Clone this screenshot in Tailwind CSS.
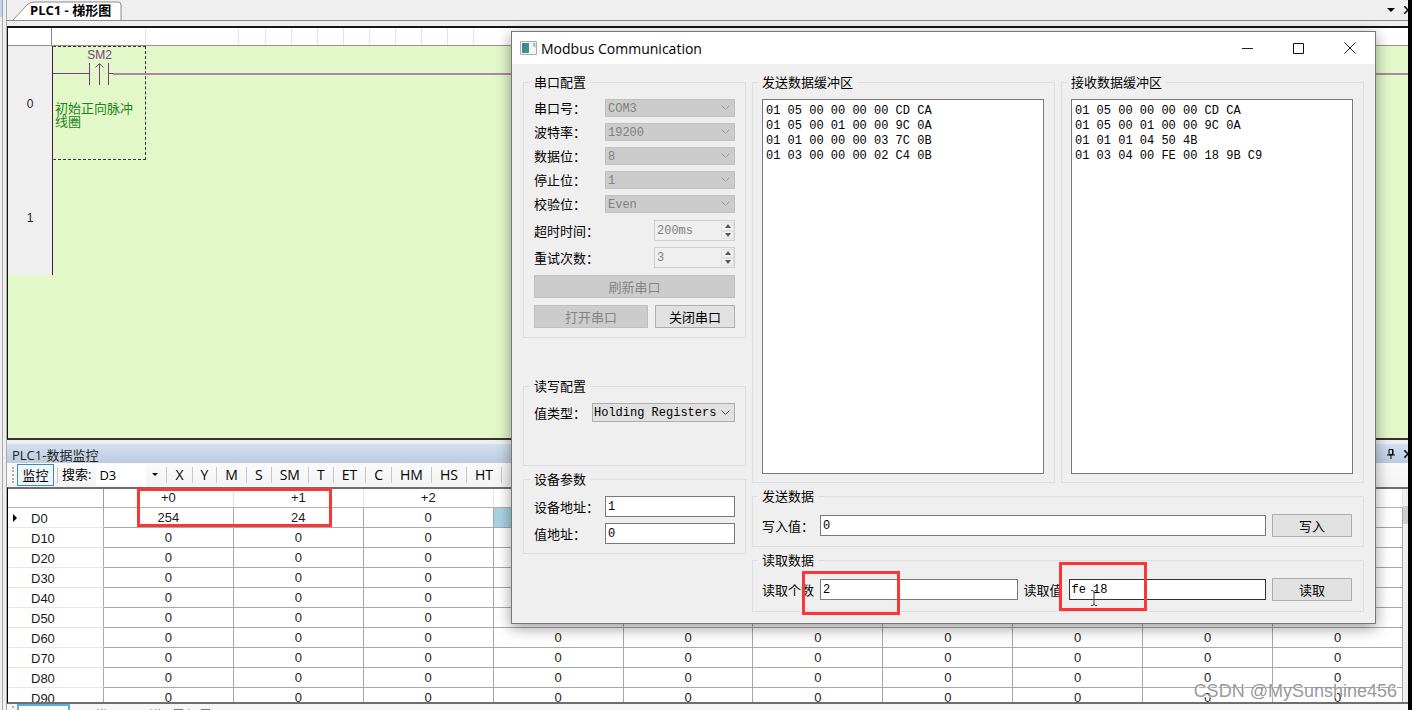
<!DOCTYPE html>
<html lang="zh-CN">
<head>
<meta charset="utf-8">
<title>PLC1 - 梯形图</title>
<script src="https://cdn.jsdelivr.net/npm/@tailwindcss/browser@4"></script>
</head>
<body class="h-screen overflow-hidden bg-[#efefef] text-[13px] text-black font-['Open_Sans','Noto_Sans_CJK_SC',sans-serif]">
<div class="relative flex h-full w-full overflow-hidden">
  <div class="w-[7px] shrink-0 border-r border-[#a8a8a8] bg-[#efefef]">
    <div class="h-[17px] w-[3px] border-r border-[#8fa3bd] bg-[#c3d3ea]"></div>
    <div class="h-full w-[3px] border-r border-[#a8a8a8]"></div>
  </div>

  <div class="flex min-w-0 flex-1 flex-col">
    <!-- Document tabs -->
    <header class="flex h-[21px] shrink-0 items-start justify-between overflow-hidden border-b border-[#8a8a8a]">
      <div class="relative h-[21px] w-[116px]">
        <svg class="absolute left-0 top-0" width="116" height="21" viewBox="0 0 116 21"><path d="M5 21 L20 5 Q23 2 27 2 H111 Q114 2 114 5 V21" fill="#fff" stroke="#8a8a8a"/></svg>
        <button type="button" class="relative ml-[23px] h-[20px] text-[13px] leading-[20px] font-bold whitespace-nowrap">PLC1 - 梯形图</button>
      </div>
      <div class="flex h-[20px] w-[21px] shrink-0 items-center gap-[9px]">
        <svg class="shrink-0" width="8" height="5" viewBox="0 0 8 5"><path d="M0 0H8L4 4Z"/></svg>
        <svg class="shrink-0" width="8" height="8" viewBox="0 0 8 8"><path d="M0 0L8 8M8 0L0 8" stroke="#000" stroke-width="1.5"/></svg>
      </div>
    </header>

    <!-- Ladder diagram -->
    <main class="mt-[5px] flex flex-1 flex-col border-y-2 border-l border-[#151515] border-b-[#333] bg-[#e2f8c9]">
      <div class="flex h-[18px] shrink-0 border-b border-[#8f978a] bg-white">
        <div class="w-[44px] border-r border-[#8a8a8a]"></div>
        <div class="w-[94px] border-r border-[#e4e4e4]"></div>
        <div class="w-[93px] border-r border-[#e4e4e4]"></div>
        <div class="w-[27px] border-r border-[#e4e4e4]"></div>
        <div class="w-[26px] border-r border-[#e4e4e4]"></div>
        <div class="w-[26px] border-r border-[#e4e4e4]"></div>
        <div class="w-[26px] border-r border-[#e4e4e4]"></div>
        <div class="w-[26px] border-r border-[#e4e4e4]"></div>
        <div class="w-[26px] border-r border-[#e4e4e4]"></div>
        <div class="w-[26px] border-r border-[#e4e4e4]"></div>
        <div class="w-[26px] border-r border-[#e4e4e4]"></div>
        <div class="w-[26px] border-r border-[#e4e4e4]"></div>
      </div>
      <div class="flex">
        <div class="w-[45px] shrink-0 border-r border-[#4a1748] bg-[#efefef] font-['Liberation_Sans',sans-serif] text-[12px] text-[#223]">
          <div class="flex h-[115px] items-center justify-center">0</div>
          <div class="flex h-[114px] items-center justify-center">1</div>
        </div>
        <div class="relative flex-1">
          <div class="h-[114px] w-[93px] border border-dashed border-[#333] border-l-transparent">
            <div class="h-[16px] text-center font-['Liberation_Sans',sans-serif] text-[12px] leading-[16px] text-[#7d3a80]">SM2</div>
            <p class="mt-[38px] pl-px font-['Noto_Sans_CJK_SC',sans-serif] text-[13px] leading-[13px] text-[#1c841c]">初始正向脉冲<br>线圈</p>
          </div>
          <div class="absolute inset-x-0 top-[16px] flex h-[24px]">
            <svg class="shrink-0" width="60" height="24" viewBox="0 0 60 24" fill="none" stroke="#7d3a80"><path d="M0 11.500H36M36.500 1V23M55.500 1V23M46.500 23V2M42.500 5.500L46.500 1.500L50.500 5.500M55 11.500H60"/></svg>
            <div class="h-[13px] flex-1 border-b-2 border-[#b184a8]"></div>
          </div>
        </div>
      </div>
    </main>

    <!-- Data monitor -->
    <section class="mt-[4px] flex h-[266px] shrink-0 flex-col">
      <div class="flex h-[19px] shrink-0 items-center justify-between bg-linear-to-b from-[#d3e1f2] to-[#bccbdd]">
        <h2 class="pl-[5px] pt-[2px] text-[13px] leading-[18px] text-[#222]">PLC1-数据监控</h2>
        <div class="flex w-[21px] shrink-0 items-center gap-[9px]">
          <svg class="shrink-0" width="8" height="10" viewBox="0 0 8 10" fill="none" stroke="#000"><path d="M2 .5H6V5.500H2ZM5.500 1V5M0 6H8M4 6V10"/></svg>
          <svg class="shrink-0" width="8" height="8" viewBox="0 0 8 8"><path d="M0 0L8 8M8 0L0 8" stroke="#000" stroke-width="1.500"/></svg>
        </div>
      </div>
      <div class="flex h-[24px] shrink-0 items-center overflow-hidden bg-linear-to-b from-[#fafafa] to-[#f3f3f3] pl-[5px] whitespace-nowrap">
        <div class="mr-[3px] h-[16px] w-0 border-l-2 border-dotted border-[#b0b0b0]"></div>
        <button type="button" class="h-[22px] w-[37px] shrink-0 border border-[#3c8fb8] bg-[#f0f6fa] leading-[20px]">监控</button>
        <div class="ml-[3px] h-[16px] w-0 border-l border-[#c8c8c8]"></div>
        <label for="find" class="ml-[4px]">搜索:</label>
        <input id="find" value="D3" class="ml-[5px] h-[22px] w-[50px] shrink-0 bg-white pl-[3px]">
        <svg class="ml-[6px] shrink-0" width="6" height="4" viewBox="0 0 6 4"><path d="M0 0H6L3 3Z"/></svg>
        <div class="ml-[8px] flex h-[16px] shrink-0 items-center text-[14px] *:h-[16px] *:border-l *:border-[#c8c8c8] *:px-2 *:leading-[16px]">
          <button type="button">X</button><button type="button">Y</button><button type="button">M</button><button type="button">S</button><button type="button">SM</button><button type="button">T</button><button type="button">ET</button><button type="button">C</button><button type="button">HM</button><button type="button">HS</button><button type="button">HT</button><button type="button">HSD</button>
        </div>
      </div>
      <div class="flex h-[217px] shrink-0 overflow-hidden border-y-2 border-l border-[#6e6e6e] border-l-black bg-white">
        <table class="w-full table-fixed border-separate border-spacing-0 self-start font-['Liberation_Sans',sans-serif] text-[13px] leading-[18px] text-[#1a1a1a]">
          <thead>
            <tr class="h-[19px] *:border-r *:border-b *:border-r-[#e2e2e2] *:border-b-[#b0b0b0] *:p-0 *:font-normal">
              <th class="w-[96px] border-r-[#9c9c9c]!"></th><th>+0</th><th>+1</th><th>+2</th><th>+3</th><th>+4</th><th>+5</th><th>+6</th><th>+7</th><th>+8</th><th>+9</th>
            </tr>
          </thead>
          <tbody id="registers"></tbody>
        </table>
        <div class="w-[5px] shrink-0 bg-[#f0f0f0] pt-[17px]"><div class="h-[18px] bg-[#cdcdcd]"></div></div>
      </div>
      <div class="flex h-[7px] items-start overflow-hidden bg-[#f6f6f6] pl-[5px]">
        <div class="mt-[2px] mr-[3px] h-[2px] w-[2px] bg-[#b0b0b0]"></div>
        <div class="h-[9px] w-[53px] shrink-0 border-2 border-[#5aafdc] bg-[#fafafa]"></div>
        <svg class="ml-[10px]" width="140" height="7" viewBox="0 0 140 7" stroke="#777" fill="none"><path d="M3 6.500H7M11 6.500H13M17 7L18 5M21 7L22 5M25 5L26 7M55 6.500H59M64 6.500H66M70 7L71 5M75 7L76 5M79 5L80 7M94 5.500H103M108 7L109 5M113 6.500H116M121 5.500H130"/></svg>
      </div>
    </section>
  </div>

  <div class="w-[4px] shrink-0 bg-black"></div>

  <!-- Highlight on registers D0 and D1 -->
  <div class="pointer-events-none absolute left-[137px] top-[488px] h-[39px] w-[195px] border-3 border-[#fb3636]"></div>

  <!-- Modbus window -->
  <div role="dialog" aria-labelledby="dlg-title" class="absolute left-[511px] top-[31px] flex w-[865px] flex-col border border-[#777] bg-[#efefef] shadow-[0_4px_14px_rgba(0,0,0,0.4)] font-['Noto_Sans_CJK_SC',sans-serif]">
    <div class="flex h-[32px] items-center bg-white pl-[8px]">
      <svg width="17" height="14" viewBox="0 0 17 14"><defs><linearGradient id="g" x2="1" y2="1"><stop stop-color="#3d79a8"/><stop offset="1" stop-color="#4a9a7a"/></linearGradient></defs><path d="M.5.5H16.500V13.500H.5Z" fill="#f4f6f8" stroke="#a9adb3"/><path d="M2 2H9V12H2Z" fill="url(#g)"/><path d="M13 2H15.500V7L13 5Z" fill="#9cc4c0"/></svg>
      <h1 id="dlg-title" class="ml-[4px] flex-1 font-['Open_Sans',sans-serif] text-[14px]">Modbus Communication</h1>
      <div class="flex *:flex *:h-[32px] *:w-[51px] *:items-center *:justify-center">
        <button type="button" aria-label="最小化"><svg width="11" height="11" viewBox="0 0 11 11"><path d="M0 5.500H11" stroke="#222"/></svg></button>
        <button type="button" aria-label="最大化"><svg width="11" height="11" viewBox="0 0 11 11"><path d="M.5.5H10.500V10.500H.5Z" fill="none" stroke="#111"/></svg></button>
        <button type="button" aria-label="关闭"><svg width="12" height="12" viewBox="0 0 12 12"><path d="M.5.5L11.500 11.500M11.500.5L.5 11.500" stroke="#222"/></svg></button>
      </div>
    </div>
    <form class="flex gap-[6px] px-[11px] pt-[11px] pb-[11px] text-[13px] leading-[14px]">
      <div class="w-[223px] shrink-0">
        <fieldset class="border border-[#dedede] px-[10px] pt-[10px] pb-[9px]">
          <legend class="-ml-[4px] px-[4px]">串口配置</legend>
          <div class="flex flex-col gap-[6px]">
            <div class="flex items-center justify-between"><label for="port">串口号：</label>
              <div class="relative h-[18px] w-[130px]"><select id="port" disabled class="h-full w-full appearance-none border border-[#bfbfbf] bg-[#cccccc] pt-px pl-[2px] font-['Liberation_Mono',monospace] text-[12px] leading-[14px] text-[#808080] opacity-100"><option>COM3</option></select><svg class="pointer-events-none absolute right-[5px] top-[6px]" width="9" height="6" viewBox="0 0 9 6"><path d="M.5.5L4.500 4.500L8.500.5" fill="none" stroke="#9a9a9a"/></svg></div></div>
            <div class="flex items-center justify-between"><label for="baud">波特率：</label>
              <div class="relative h-[18px] w-[130px]"><select id="baud" disabled class="h-full w-full appearance-none border border-[#bfbfbf] bg-[#cccccc] pt-px pl-[2px] font-['Liberation_Mono',monospace] text-[12px] leading-[14px] text-[#808080] opacity-100"><option>19200</option></select><svg class="pointer-events-none absolute right-[5px] top-[6px]" width="9" height="6" viewBox="0 0 9 6"><path d="M.5.5L4.500 4.500L8.500.5" fill="none" stroke="#9a9a9a"/></svg></div></div>
            <div class="flex items-center justify-between"><label for="bits">数据位：</label>
              <div class="relative h-[18px] w-[130px]"><select id="bits" disabled class="h-full w-full appearance-none border border-[#bfbfbf] bg-[#cccccc] pt-px pl-[2px] font-['Liberation_Mono',monospace] text-[12px] leading-[14px] text-[#808080] opacity-100"><option>8</option></select><svg class="pointer-events-none absolute right-[5px] top-[6px]" width="9" height="6" viewBox="0 0 9 6"><path d="M.5.5L4.500 4.500L8.500.5" fill="none" stroke="#9a9a9a"/></svg></div></div>
            <div class="flex items-center justify-between"><label for="stop">停止位：</label>
              <div class="relative h-[18px] w-[130px]"><select id="stop" disabled class="h-full w-full appearance-none border border-[#bfbfbf] bg-[#cccccc] pt-px pl-[2px] font-['Liberation_Mono',monospace] text-[12px] leading-[14px] text-[#808080] opacity-100"><option>1</option></select><svg class="pointer-events-none absolute right-[5px] top-[6px]" width="9" height="6" viewBox="0 0 9 6"><path d="M.5.5L4.500 4.500L8.500.5" fill="none" stroke="#9a9a9a"/></svg></div></div>
            <div class="flex items-center justify-between"><label for="parity">校验位：</label>
              <div class="relative h-[18px] w-[130px]"><select id="parity" disabled class="h-full w-full appearance-none border border-[#bfbfbf] bg-[#cccccc] pt-px pl-[2px] font-['Liberation_Mono',monospace] text-[12px] leading-[14px] text-[#808080] opacity-100"><option>Even</option></select><svg class="pointer-events-none absolute right-[5px] top-[6px]" width="9" height="6" viewBox="0 0 9 6"><path d="M.5.5L4.500 4.500L8.500.5" fill="none" stroke="#9a9a9a"/></svg></div></div>
          </div>
          <div class="mt-[7px] flex flex-col gap-[6px]">
            <div class="flex items-center justify-between"><label for="timeout">超时时间：</label>
              <div class="flex h-[21px] w-[81px] border border-[#cfcfcf] bg-[#efefef]"><input id="timeout" disabled value="200ms" class="min-w-0 flex-1 pl-[2px] font-['Liberation_Mono',monospace] text-[12px] text-[#808080]">
                <div class="flex w-[13px] flex-col py-px *:flex *:flex-1 *:items-center *:justify-center *:border *:border-[#e0e0e0]"><button type="button" aria-label="增加"><svg width="6" height="4" viewBox="0 0 6 4"><path d="M0 4H6L3 0Z" fill="#555"/></svg></button><button type="button" aria-label="减少"><svg width="6" height="4" viewBox="0 0 6 4"><path d="M0 0H6L3 4Z" fill="#555"/></svg></button></div></div></div>
            <div class="flex items-center justify-between"><label for="retry">重试次数：</label>
              <div class="flex h-[21px] w-[81px] border border-[#cfcfcf] bg-[#efefef]"><input id="retry" disabled value="3" class="min-w-0 flex-1 pl-[2px] font-['Liberation_Mono',monospace] text-[12px] text-[#808080]">
                <div class="flex w-[13px] flex-col py-px *:flex *:flex-1 *:items-center *:justify-center *:border *:border-[#e0e0e0]"><button type="button" aria-label="增加"><svg width="6" height="4" viewBox="0 0 6 4"><path d="M0 4H6L3 0Z" fill="#555"/></svg></button><button type="button" aria-label="减少"><svg width="6" height="4" viewBox="0 0 6 4"><path d="M0 0H6L3 4Z" fill="#555"/></svg></button></div></div></div>
          </div>
          <button type="button" disabled class="mt-[7px] block h-[23px] w-full border border-[#bfbfbf] bg-[#cccccc] text-[#858585]">刷新串口</button>
          <div class="mt-[7px] flex gap-[7px]">
            <button type="button" disabled class="h-[23px] flex-1 border border-[#bfbfbf] bg-[#cccccc] text-[#858585]">打开串口</button>
            <button type="button" class="h-[23px] w-[80px] border border-[#adadad] bg-[#e1e1e1]">关闭串口</button>
          </div>
        </fieldset>
        <fieldset class="mt-[41px] h-[87px] border border-[#dedede] px-[10px] pt-[10px]">
          <legend class="-ml-[4px] px-[4px]">读写配置</legend>
          <div class="flex items-center justify-between"><label for="kind">值类型：</label>
            <div class="relative h-[19px] w-[143px]"><select id="kind" class="h-full w-full appearance-none border border-[#adadad] bg-[#e1e1e1] pl-px font-['Liberation_Mono',monospace] text-[12px] leading-[14px]"><option>Holding Registers</option></select><svg class="pointer-events-none absolute right-[5px] top-[7px]" width="9" height="6" viewBox="0 0 9 6"><path d="M.5.5L4.500 4.500L8.500.5" fill="none" stroke="#444"/></svg></div></div>
        </fieldset>
        <fieldset class="mt-[6px] border border-[#dedede] px-[10px] pt-[10px] pb-[9px]">
          <legend class="-ml-[4px] px-[4px]">设备参数</legend>
          <div class="flex flex-col gap-[6px]">
            <div class="flex items-center justify-between"><label for="dev">设备地址：</label><input id="dev" value="1" class="h-[21px] w-[130px] border border-[#7a7a7a] bg-white pl-[2px] font-['Liberation_Mono',monospace] text-[12px]"></div>
            <div class="flex items-center justify-between"><label for="addr">值地址：</label><input id="addr" value="0" class="h-[21px] w-[130px] border border-[#7a7a7a] bg-white pl-[2px] font-['Liberation_Mono',monospace] text-[12px]"></div>
          </div>
        </fieldset>
      </div>

      <div class="flex min-w-0 flex-1 flex-col gap-[6px]">
        <div class="grid grid-cols-2 gap-[6px]">
          <fieldset class="min-w-0 border border-[#dedede] pt-[10px] pr-[10px] pb-[8px] pl-[9px]">
            <legend class="-ml-[4px] px-[4px]"><label for="tx">发送数据缓冲区</label></legend>
            <textarea id="tx" readonly class="block h-[375px] w-full resize-none border border-[#7a7a7a] bg-white px-[3px] py-[4px] font-['Liberation_Mono',monospace] text-[12px] leading-[15px]">01 05 00 00 00 00 CD CA
01 05 00 01 00 00 9C 0A
01 01 00 00 00 03 7C 0B
01 03 00 00 00 02 C4 0B</textarea>
          </fieldset>
          <fieldset class="min-w-0 border border-[#dedede] pt-[10px] pr-[10px] pb-[8px] pl-[9px]">
            <legend class="-ml-[4px] px-[4px]"><label for="rx">接收数据缓冲区</label></legend>
            <textarea id="rx" readonly class="block h-[375px] w-full resize-none border border-[#7a7a7a] bg-white px-[3px] py-[4px] font-['Liberation_Mono',monospace] text-[12px] leading-[15px]">01 05 00 00 00 00 CD CA
01 05 00 01 00 00 9C 0A
01 01 01 04 50 4B
01 03 04 00 FE 00 18 9B C9</textarea>
          </fieldset>
        </div>
        <fieldset class="min-w-0 border border-[#dedede] pt-[11px] pr-[11px] pb-[9px] pl-[9px]">
          <legend class="-ml-[4px] px-[4px]">发送数据</legend>
          <div class="flex items-center gap-[6px]">
            <label for="wv" class="w-[52px] shrink-0">写入值：</label><input id="wv" value="0" class="h-[21px] min-w-0 flex-1 border border-[#7a7a7a] bg-white pl-[2px] font-['Liberation_Mono',monospace] text-[12px]">
            <button type="button" class="h-[23px] w-[80px] shrink-0 border border-[#adadad] bg-[#e1e1e1]">写入</button>
          </div>
        </fieldset>
        <fieldset class="min-w-0 border border-[#dedede] pt-[11px] pr-[11px] pb-[10px] pl-[9px]">
          <legend class="-ml-[4px] px-[4px]">读取数据</legend>
          <div class="flex items-center gap-[6px]">
            <label for="cnt" class="w-[52px] shrink-0">读取个数</label><input id="cnt" value="2" class="h-[21px] min-w-0 flex-1 border border-[#7a7a7a] bg-white pl-[2px] font-['Liberation_Mono',monospace] text-[12px]">
            <label for="rv" class="w-[39px] shrink-0">读取值</label><input id="rv" value="fe 18" class="h-[21px] min-w-0 flex-1 border border-[#333] bg-white pl-[2px] font-['Liberation_Mono',monospace] text-[12px]">
            <button type="button" class="h-[23px] w-[80px] shrink-0 border border-[#adadad] bg-[#e1e1e1]">读取</button>
          </div>
        </fieldset>
      </div>
    </form>

    <!-- Highlights and pointer over the read row -->
    <div class="pointer-events-none absolute left-[290px] top-[539px] h-[44px] w-[98px] border-3 border-[#fb3636]"></div>
    <div class="pointer-events-none absolute left-[547px] top-[530px] h-[49px] w-[88px] border-3 border-[#fb3636]"></div>
    <svg class="pointer-events-none absolute left-[578px] top-[558px]" width="8" height="16" viewBox="0 0 8 16"><path d="M1 .5H3L4 1.500L5 .5H7M4 1V14M1 15.500H3L4 14L5 15.500H7" fill="none" stroke="#444"/></svg>
  </div>

  <div class="pointer-events-none absolute right-[15px] bottom-[7px] font-['Liberation_Sans',sans-serif] text-[18px] leading-[24px] text-[#8c8c8c]/90 text-shadow-[1px_1px_0_#ffffff]">CSDN @MySunshine456</div>
</div>
<script>
const first = ['254', '24', '0', '', '0', '0', '0', '0', '0', '0'];
document.getElementById('registers').innerHTML = Array.from({ length: 10 }, (_, r) => {
  const cells = first.map((v, c) => r === 0 && c === 3
    ? '<td class="bg-[#a6d3e4]"></td>'
    : `<td>${r === 0 ? v : '0'}</td>`).join('');
  const mark = r === 0
    ? '<svg class="absolute left-[5px] top-[6px]" width="4" height="8" viewBox="0 0 4 8"><path d="M0 0L4 4L0 8Z"/></svg>' : '';
  return `<tr class="h-[20px] text-center *:border-r *:border-b *:border-[#a8a8a8] *:p-0"><th class="relative border-b-[#e6e6e6]! pl-[23px]! pt-[2px]! text-left leading-[17px] font-normal">${mark}D${r * 10}</th>${cells}</tr>`;
}).join('');
</script>
</body>
</html>
